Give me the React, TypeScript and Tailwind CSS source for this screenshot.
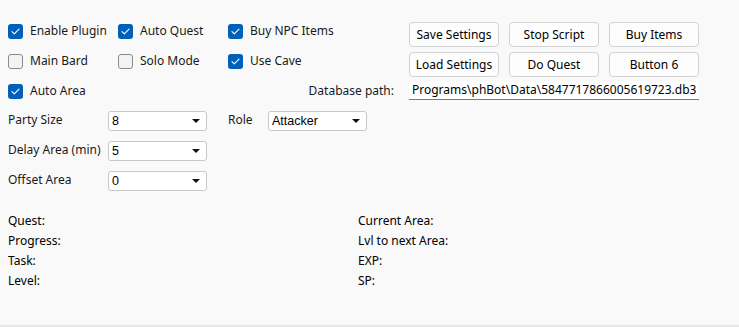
import React from 'react';

type CheckProps = { label: string; checked?: boolean };

const Check = ({ label, checked }: CheckProps) => (
  <div className="flex w-[110px] items-center gap-[7px]">
    {checked ? (
      <span className="flex h-[15px] w-[15px] items-center justify-center rounded-[3px] bg-[#005fb8]">
        <svg width="9" height="7" viewBox="0 0 9 7" fill="none" aria-hidden="true">
          <path d="M1 3.6 L3.3 5.8 L8 1.2" stroke="white" strokeWidth="1.1" strokeLinecap="round" strokeLinejoin="round" />
        </svg>
      </span>
    ) : (
      <span className="h-[15px] w-[15px] rounded-[3px] border border-[#8a8a8a] bg-[#f3f3f3]" />
    )}
    <span className="whitespace-nowrap">{label}</span>
  </div>
);

const Btn = ({ label }: { label: string }) => (
  <button className="flex h-[25px] w-[90px] items-center justify-center rounded-[4px] border border-[#d3d3d3] bg-[#fdfdfd] text-black">
    {label}
  </button>
);

const Combo = ({ value }: { value: string }) => (
  <div className="flex h-[20px] w-[99px] items-center justify-between rounded-[3px] border border-[#c8c8c8] bg-white pl-[3px] pr-[6px] font-['Liberation_Sans',sans-serif] text-[12.5px] text-black">
    <span>{value}</span>
    <svg width="8" height="4" viewBox="0 0 8 4" aria-hidden="true">
      <path d="M0 0 H8 L4 4 Z" fill="#111" />
    </svg>
  </div>
);

export default function App() {
  return (
    <div className="h-[327px] w-[739px] border-b-2 border-[#e5e5e5] bg-[#f9f9f9] pl-[8px] font-['Noto_Sans',sans-serif] text-[12px] text-[#1a1a1a]">
      <div className="flex">
        <div className="flex w-[401px] flex-col pt-[16px]">
          <div className="flex h-[30px] items-center">
            <Check label="Enable Plugin" checked />
            <Check label="Auto Quest" checked />
            <Check label="Buy NPC Items" checked />
          </div>
          <div className="flex h-[30px] items-center">
            <Check label="Main Bard" />
            <Check label="Solo Mode" />
            <Check label="Use Cave" checked />
          </div>
          <div className="flex h-[30px] items-center">
            <Check label="Auto Area" checked />
            <span className="ml-auto pr-[15px] pb-[1px]">Database path:</span>
          </div>
        </div>
        <div className="flex flex-col pt-[22px]">
          <div className="flex gap-[10px]">
            <Btn label="Save Settings" />
            <Btn label="Stop Script" />
            <Btn label="Buy Items" />
          </div>
          <div className="mt-[5px] flex gap-[10px]">
            <Btn label="Load Settings" />
            <Btn label="Do Quest" />
            <Btn label="Button 6" />
          </div>
          <div className="mt-[4px] flex h-[19px] w-[290px] items-center whitespace-nowrap border-b border-[#7a7a7a] bg-white pl-[3px] text-black">
            Programs\phBot\Data\5847717866005619723.db3
          </div>
        </div>
      </div>

      <div className="flex flex-col">
        <div className="flex h-[30px] items-center">
          <span className="w-[100px] pb-[3px]">Party Size</span>
          <Combo value="8" />
          <span className="ml-[21px] w-[40px] pb-[3px]">Role</span>
          <Combo value="Attacker" />
        </div>
        <div className="flex h-[30px] items-center">
          <span className="w-[100px] whitespace-nowrap pb-[3px]">Delay Area (min)</span>
          <Combo value="5" />
        </div>
        <div className="flex h-[30px] items-center">
          <span className="w-[100px] pb-[3px]">Offset Area</span>
          <Combo value="0" />
        </div>
      </div>

      <div className="mt-[15px] grid grid-cols-[350px_1fr] text-[12px] leading-[20px] text-black">
        <div className="flex flex-col">
          <span>Quest:</span>
          <span>Progress:</span>
          <span>Task:</span>
          <span>Level:</span>
        </div>
        <div className="flex flex-col">
          <span>Current Area:</span>
          <span>Lvl to next Area:</span>
          <span>EXP:</span>
          <span>SP:</span>
        </div>
      </div>
    </div>
  );
}
